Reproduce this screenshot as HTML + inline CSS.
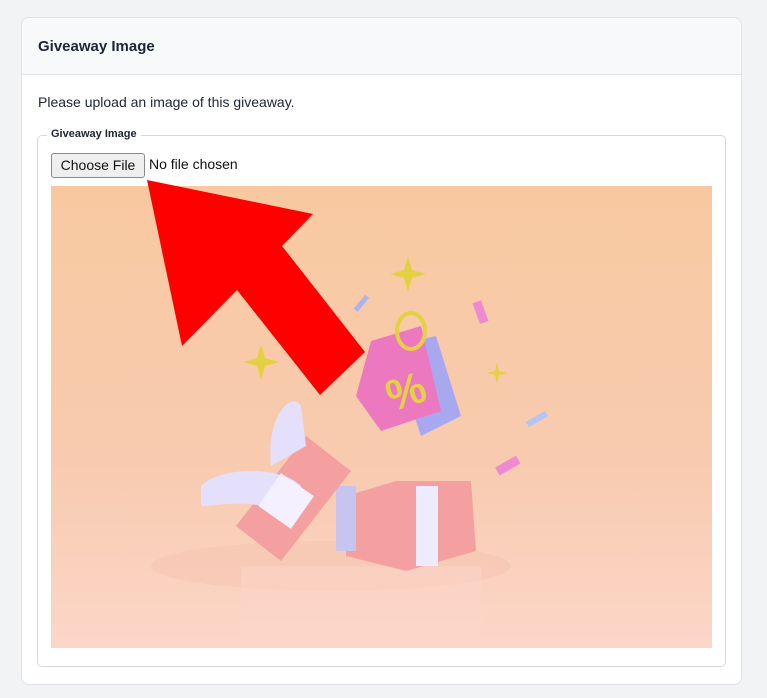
<!DOCTYPE html>
<html><head><style>
*{box-sizing:border-box;margin:0;padding:0}
body{width:767px;height:698px;background:#f2f3f5;font-family:"Liberation Sans",sans-serif;position:relative;overflow:hidden}
.card{position:absolute;left:21px;top:17px;width:721px;height:668px;background:#fff;border:1px solid #dfe2e7;border-radius:8px;overflow:hidden}
.hd{height:57px;background:#f8f9fb;border-bottom:1px solid #dfe2e7;padding-left:16px;line-height:57px;font-weight:bold;font-size:15px;color:#1d2433}
.p{position:absolute;left:16px;top:76px;font-size:14px;color:#1d2433}
.fs{position:absolute;left:15px;top:117px;width:689px;height:532px;border:1px solid #d5d9df;border-radius:5px}
.lg{position:absolute;left:9px;top:-8px;background:#fff;padding:0 4px;font-size:11px;font-weight:bold;color:#1d2433}
.btn{position:absolute;left:13px;top:17px;width:94px;height:25px;border:1px solid #8a8a8a;border-radius:3px;background:#efefef;font-size:14px;text-align:center;line-height:22px;color:#111}
.nf{position:absolute;left:111px;top:20px;font-size:14px;color:#111}
.img{position:absolute;left:13px;top:50px;width:661px;height:462px;background:linear-gradient(#f8c9a0,#f8cbb0 60%,#fcd6c8)}
</style></head><body>
<div class="card">
<div class="hd">Giveaway Image</div>
<div class="p">Please upload an image of this giveaway.</div>
<div class="fs"><div class="lg">Giveaway Image</div>
<div class="btn">Choose File</div><div class="nf">No file chosen</div>
<div class="img"><svg width="661" height="462">
<ellipse cx="280" cy="380" rx="180" ry="25" fill="#f0b8a4" opacity=".25"/>
<rect x="190" y="380" width="240" height="80" fill="#fcd8cc" opacity=".4"/>
<g fill="#e5d044"><path d="M357 70l4 14 14 4-14 4-4 14-4-14-14-4 14-4z"/><path d="M210 158l4 14 14 4-14 4-4 14-4-14-14-4 14-4z"/><path d="M446 176l2 9 9 2-9 2-2 9-2-9-9-2 9-2z"/></g>
<rect x="308" y="108" width="5" height="18" fill="#aab4f0" transform="rotate(40 310 117)"/>
<rect x="425" y="115" width="9" height="22" fill="#f08ad0" transform="rotate(-20 430 126)"/>
<rect x="475" y="230" width="22" height="6" fill="#b4c4f4" transform="rotate(-30 486 233)"/>
<rect x="445" y="275" width="24" height="9" fill="#f08ad0" transform="rotate(-30 457 280)"/>
<path d="M340 160 L385 150 L410 230 L370 250Z" fill="#a8a8f0"/>
<path d="M320 155 L370 140 L390 225 L330 245 L305 210Z" fill="#ec78c0"/>
<ellipse cx="360" cy="145" rx="14" ry="18" fill="none" stroke="#e5d044" stroke-width="4"/>
<text x="335" y="222" font-size="44" font-weight="bold" fill="#e5d044" transform="rotate(-18 350 205)">%</text>
<path d="M295 310 L345 295 L420 295 L425 365 L355 385 L295 370Z" fill="#f5a0a0"/>
<rect x="365" y="300" width="22" height="80" fill="#eeeaff"/>
<rect x="285" y="300" width="20" height="65" fill="#c8c4f0"/>
<path d="M185 340 L255 250 L300 285 L230 375Z" fill="#f4a0a0"/>
<path d="M150 300 C170 280 230 280 250 300 L240 330 C200 310 170 320 150 320Z" fill="#e4e0fc"/>
<path d="M220 280 C215 230 240 205 250 220 L255 260Z" fill="#e4e0fc"/>
<rect x="215" y="295" width="40" height="40" fill="#f4f0ff" transform="rotate(35 235 315)"/>
</svg></div>
</div>
</div>
<svg style="position:absolute;left:0;top:0" width="767" height="698"><polygon points="147,180 313,214 282,246 365,352 320,395 237,290 182,346" fill="#ff0000"/></svg>
</body></html>
